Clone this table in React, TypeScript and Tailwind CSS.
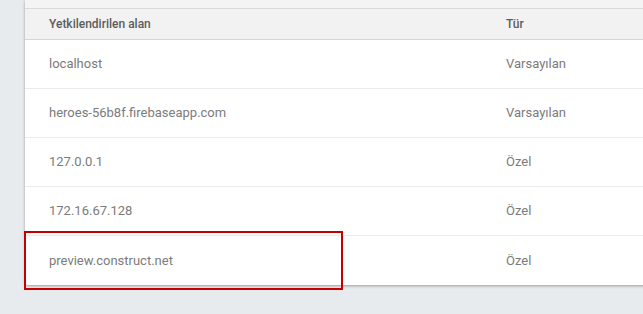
const rows = [
  { domain: "localhost", type: "Varsayılan" },
  { domain: "heroes-56b8f.firebaseapp.com", type: "Varsayılan" },
  { domain: "127.0.0.1", type: "Özel" },
  { domain: "172.16.67.128", type: "Özel" },
  { domain: "preview.construct.net", type: "Özel" },
];

export default function App() {
  return (
    <main
      className="relative h-[314px] w-[643px] overflow-hidden bg-[#e8ebee]"
      style={{ fontFamily: "Roboto, 'Liberation Sans', sans-serif" }}
    >
      <div className="ml-[25px] w-[640px] rounded-b-[3px] bg-white shadow-[0_1px_3px_rgba(0,0,0,0.35)]">
        <div className="h-[9px] border-b border-[#dadada] bg-[#f4f4f4]" />
        <div className="flex h-[31px] items-center border-b border-[#d6d6d6] bg-[#f2f2f2] text-[12px] font-medium text-[#5c5c5c]">
          <div className="w-[481px] pl-[24px]">Yetkilendirilen alan</div>
          <div>Tür</div>
        </div>
        {rows.map((r, i) => (
          <div
            key={r.domain}
            className={`flex h-[49px] items-center text-[13px] text-[#7b7b7b] ${
              i < rows.length - 1 ? "border-b border-[#ebebeb]" : ""
            }`}
          >
            <div className="w-[481px] pl-[24px]">{r.domain}</div>
            <div>{r.type}</div>
          </div>
        ))}
      </div>
      <div className="absolute left-[24px] top-[231px] h-[59px] w-[319px] border-2 border-[#c40000]" />
    </main>
  );
}
